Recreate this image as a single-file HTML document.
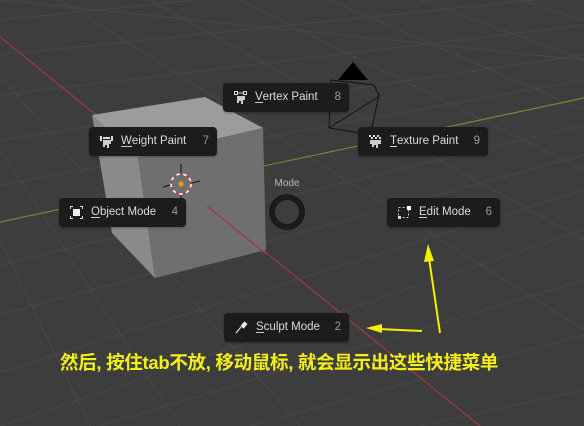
<!DOCTYPE html>
<html><head><meta charset="utf-8"><style>
*{margin:0;padding:0}
body{width:584px;height:426px;overflow:hidden;background:#3d3d3d;position:relative;font-family:"Liberation Sans","DejaVu Sans",sans-serif}
svg{position:absolute;left:0;top:0}
.m{position:absolute;height:29px;background:#1c1c1c;border-radius:4px;color:#dcdcdc;font-size:11.5px;line-height:29px;box-shadow:0 1px 2px rgba(0,0,0,.3)}
.m .t{position:absolute;left:32px;top:0}
.m .t u{text-decoration:none;border-bottom:1px solid #ccc;line-height:10px;display:inline-block}
.m .k{position:absolute;right:8px;top:0;color:#9a9a9a}
.m .i{position:absolute;left:11px;top:8px;width:13px;height:13px}
.cn{position:absolute;left:60px;top:349px;font-family:"Liberation Sans","Noto Sans CJK SC",sans-serif;font-weight:bold;font-size:18.5px;color:#f2ef1a;white-space:nowrap;letter-spacing:-0.3px}
</style></head><body>
<svg width="584" height="426" viewBox="0 0 584 426">
<g stroke="#484848" stroke-width="1" fill="none">
<line x1="0" y1="20" x2="584" y2="-40"/>
<line x1="0" y1="55" x2="584" y2="-5"/>
<line x1="0" y1="95" x2="584" y2="25"/>
<line x1="0" y1="140" x2="584" y2="55"/>
<line x1="0" y1="185" x2="584" y2="80"/>
<line x1="0" y1="265" x2="584" y2="125"/>
<line x1="0" y1="315" x2="584" y2="155"/>
<line x1="0" y1="372" x2="584" y2="190"/>
<line x1="0" y1="426" x2="584" y2="230"/>
<line x1="100" y1="426" x2="584" y2="280"/>
<line x1="250" y1="426" x2="584" y2="335"/>
<line x1="420" y1="426" x2="584" y2="390"/>
<line x1="0" y1="0" x2="584" y2="60"/>
<line x1="0" y1="75" x2="300" y2="426"/>
<line x1="0" y1="150" x2="180" y2="426"/>
<line x1="0" y1="240" x2="90" y2="426"/>
<line x1="60" y1="0" x2="584" y2="330"/>
<line x1="150" y1="0" x2="584" y2="240"/>
<line x1="240" y1="0" x2="584" y2="170"/>
<line x1="330" y1="0" x2="584" y2="110"/>
<line x1="420" y1="0" x2="584" y2="60"/>
<line x1="520" y1="0" x2="584" y2="20"/>
</g>
<line x1="0" y1="222" x2="584" y2="98" stroke="#6a8f2e" stroke-width="1.2"/>
<line x1="0" y1="37" x2="480" y2="426" stroke="#9a3b44" stroke-width="1.2"/>
<polygon points="92,115 205,97 263,128 138,157" fill="#9c9c9c"/>
<polygon points="92,115 138,157 155,278 112,233" fill="#8a8a8a"/>
<polygon points="138,157 263,128 266,250 155,278" fill="#6f6f6f"/>
<line x1="207" y1="206" x2="266" y2="254" stroke="#9a3b44" stroke-width="1.2"/>
<g stroke="#111" stroke-width="1" fill="none">
<polyline points="331,80 374,85 379,95 372,127"/>
<line x1="331" y1="80" x2="329" y2="128"/>
<line x1="329" y1="128" x2="373" y2="135"/>
<line x1="329" y1="128" x2="378" y2="97"/>
</g>
<polygon points="353,62 338,80 368,80" fill="#000"/>
<circle cx="181" cy="184" r="10" fill="none" stroke="#fff" stroke-width="1.5" stroke-dasharray="4 3"/>
<circle cx="181" cy="184" r="10" fill="none" stroke="#d03030" stroke-width="1.5" stroke-dasharray="3 4" stroke-dashoffset="3.5"/>
<g stroke="#111" stroke-width="1"><line x1="181" y1="164" x2="181" y2="173"/><line x1="181" y1="195" x2="181" y2="203"/><line x1="163" y1="187" x2="170" y2="185"/><line x1="192" y1="183" x2="200" y2="181"/></g>
<circle cx="181" cy="184" r="2.5" fill="#f39a1a"/>
<text x="287" y="186" font-size="10" fill="#b8b8b8" text-anchor="middle" font-family="Liberation Sans, sans-serif">Mode</text>
<circle cx="287" cy="212" r="15" fill="none" stroke="#1a1a1a" stroke-width="6"/>
<g fill="#f5f000" stroke="#f5f000">
<line x1="440" y1="333" x2="429" y2="258" stroke-width="2"/>
<polygon points="428,244 424,262 434,261" stroke="none"/>
<line x1="422" y1="331" x2="378" y2="329" stroke-width="2"/>
<polygon points="366,328 382,324 382,333" stroke="none"/>
</g>
</svg>

<div class="m" style="left:223px;top:83px;width:126px"><svg class="i" viewBox="0 0 13 13"><rect x="0.5" y="0.5" width="3" height="3" fill="none" stroke="#ddd"/><rect x="9.5" y="0.5" width="3" height="3" fill="none" stroke="#ddd"/><line x1="3.5" y1="2" x2="9.5" y2="2" stroke="#ddd"/><path d="M3 5h8v4h-2v4h-2v-3h-2v2h-2z" fill="#ccc"/></svg><span class="t"><u>V</u>ertex Paint</span><span class="k">8</span></div>
<div class="m" style="left:89px;top:127px;width:128px"><svg class="i" viewBox="0 0 13 13"><rect x="0" y="1" width="2" height="5" fill="#ddd"/><rect x="11" y="1" width="2" height="5" fill="#ddd"/><rect x="3" y="2" width="7" height="2" fill="#ddd"/><path d="M3 5h8v4h-2v4h-2v-3h-2v2h-2z" fill="#ccc"/></svg><span class="t"><u>W</u>eight Paint</span><span class="k">7</span></div>
<div class="m" style="left:358px;top:127px;width:130px"><svg class="i" viewBox="0 0 13 13"><path d="M0 0h2v2h-2zM4 0h2v2h-2zM8 0h2v2h-2zM2 2h2v2h-2zM6 2h2v2h-2zM10 2h2v2h-2z" fill="#ddd"/><path d="M1 5h11v4h-3v4h-2v-3h-2v2h-2v-3h-2z" fill="#ccc"/></svg><span class="t"><u>T</u>exture Paint</span><span class="k">9</span></div>
<div class="m" style="left:59px;top:198px;width:127px"><svg class="i" viewBox="0 0 13 13"><path d="M0.5 3V0.5H3M10 0.5h2.5V3M12.5 10v2.5H10M3 12.5H0.5V10" fill="none" stroke="#ddd"/><rect x="3" y="3" width="7" height="7" fill="#eee"/></svg><span class="t"><u>O</u>bject Mode</span><span class="k">4</span></div>
<div class="m" style="left:387px;top:198px;width:113px"><svg class="i" viewBox="0 0 13 13"><rect x="0.5" y="1.5" width="10" height="10" fill="none" stroke="#ccc" stroke-dasharray="2 2"/><rect x="9" y="0" width="4" height="4" fill="#fff"/><rect x="0" y="10" width="3" height="3" fill="#ddd"/></svg><span class="t"><u>E</u>dit Mode</span><span class="k">6</span></div>
<div class="m" style="left:224px;top:313px;width:125px"><svg class="i" viewBox="0 0 13 13"><path d="M1 12L6 6" stroke="#ddd" stroke-width="1.3"/><rect x="7" y="1" width="4" height="6" transform="rotate(40 9 4)" fill="#eee"/></svg><span class="t"><u>S</u>culpt Mode</span><span class="k">2</span></div>

<div class="cn">然后, 按住tab不放, 移动鼠标, 就会显示出这些快捷菜单</div>
</body></html>
